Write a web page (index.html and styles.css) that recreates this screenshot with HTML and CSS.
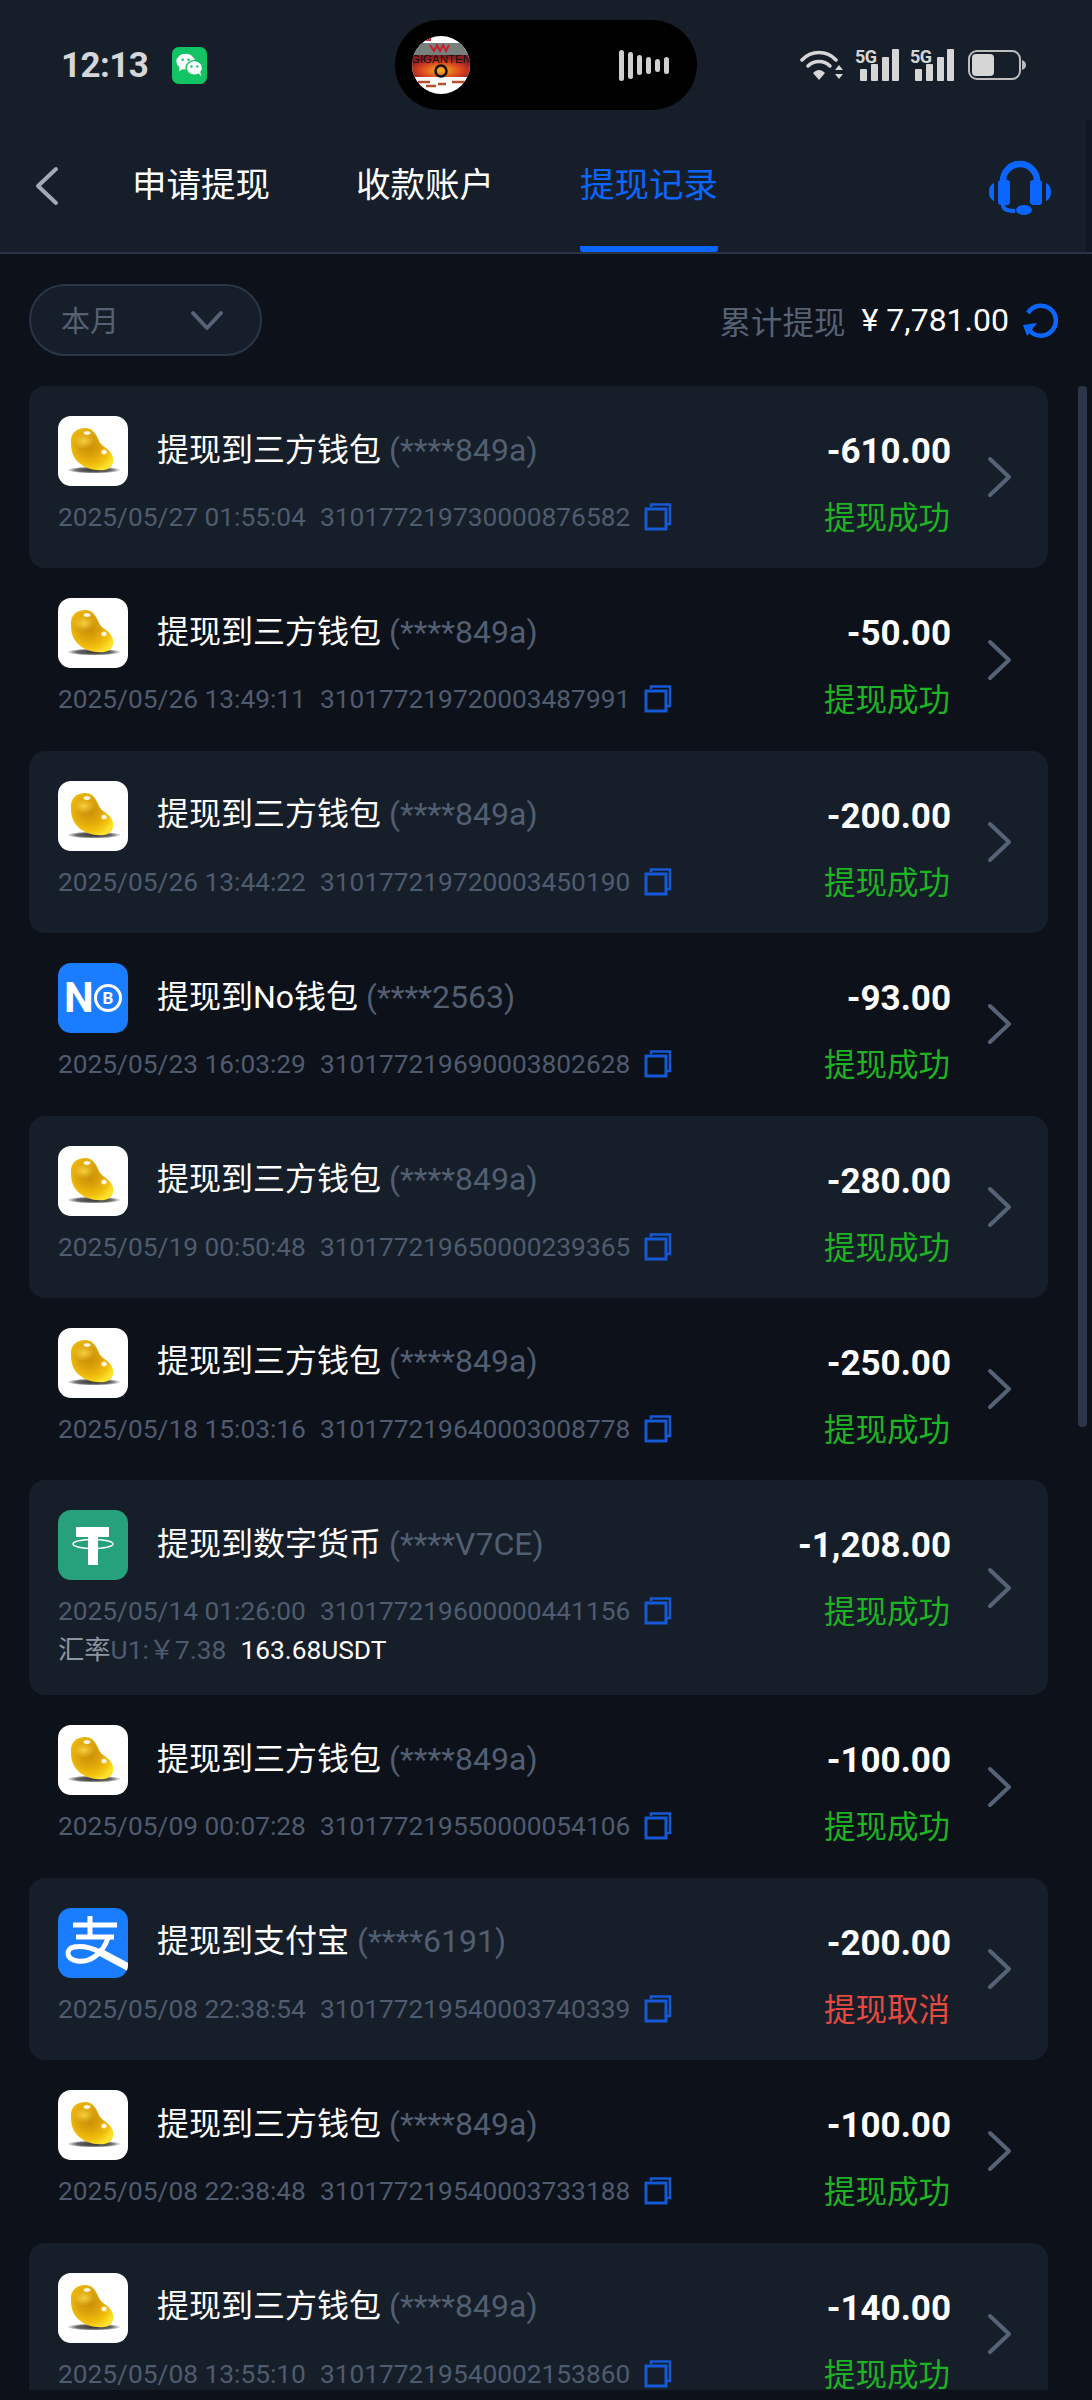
FILE: index.html
```html
<!DOCTYPE html>
<html lang="zh-CN">
<head>
  <meta charset="UTF-8">
  <meta name="viewport" content="width=device-width, initial-scale=1.0">
  <title>提现记录</title>
  <link rel="stylesheet" href="styles.css">
</head>
<body>
  <!-- shared icons -->
  <svg class="defs" width="0" height="0">
    <defs>
      <radialGradient id="beanFill" cx="0.42" cy="0.4" r="0.66">
        <stop offset="0" stop-color="#c68c08"/>
        <stop offset="0.4" stop-color="#dca20a"/>
        <stop offset="0.75" stop-color="#f2c00c"/>
        <stop offset="1" stop-color="#ffe22e"/>
      </radialGradient>
      <radialGradient id="beanLobe" cx="0.5" cy="0.5" r="0.5">
        <stop offset="0" stop-color="#f6cf3c"/>
        <stop offset="1" stop-color="#f6cf3c" stop-opacity="0"/>
      </radialGradient>
      <radialGradient id="beanShine" cx="0.5" cy="0.5" r="0.5">
        <stop offset="0" stop-color="#fff"/>
        <stop offset="0.55" stop-color="#fff" stop-opacity="0.85"/>
        <stop offset="1" stop-color="#fff" stop-opacity="0"/>
      </radialGradient>
      <radialGradient id="beanShadow" cx="0.5" cy="0.5" r="0.5">
        <stop offset="0" stop-color="#333"/>
        <stop offset="0.65" stop-color="#666"/>
        <stop offset="1" stop-color="#fff"/>
      </radialGradient>
      <radialGradient id="logoFill" cx="0.5" cy="0.7" r="0.6">
        <stop offset="0" stop-color="#f5b324"/>
        <stop offset="0.6" stop-color="#d9431f"/>
        <stop offset="1" stop-color="#8a1d22"/>
      </radialGradient>
    </defs>
    <symbol id="bean" viewBox="0 0 70 70">
      <rect width="70" height="70" rx="13" fill="#fff"/>
      <ellipse cx="36" cy="54" rx="27" ry="3.500" fill="url(#beanShadow)"/>
      <path d="M13 27C12 17 19 12 27 12C35 12 38 18 41 25C43 30 50 32 53 37C58 44 55 53 46 54C36 55 26 52 20 46C15 41 13 35 13 27Z" fill="url(#beanFill)"/>
      <ellipse cx="26" cy="25" rx="11" ry="8" fill="url(#beanLobe)"/>
      <ellipse cx="29" cy="17" rx="4.500" ry="2.500" fill="url(#beanShine)"/>
      <ellipse cx="46" cy="36" rx="3.500" ry="3" fill="url(#beanShine)"/>
    </symbol>
    <symbol id="copy" viewBox="0 0 28 28">
      <path d="M7 4V1.500H26V21H23" fill="none" stroke="#1659d6" stroke-width="2.500"/>
      <rect x="2" y="6" width="20" height="20" fill="none" stroke="#1659d6" stroke-width="3"/>
    </symbol>
    <symbol id="arrow" viewBox="0 0 26 42">
      <path d="M3 3L22 21L3 39" fill="none" stroke="#566377" stroke-width="4" stroke-linecap="round" stroke-linejoin="round"/>
    </symbol>
  </svg>

  <div class="statusbar">
    <div class="status-left">
      <span class="clock">12:13</span>
      <svg class="wechat" viewBox="0 0 36 38">
        <rect width="36" height="38" rx="7" fill="#12c464"/>
        <ellipse cx="14" cy="15" rx="9.500" ry="8" fill="#fff"/>
        <path d="M8 20L7 25L13 22Z" fill="#fff"/>
        <ellipse cx="23" cy="21.500" rx="8.500" ry="7.500" fill="#fff" stroke="#12c464" stroke-width="1.500"/>
        <path d="M27 27L30 30L29 25Z" fill="#fff"/>
        <circle cx="11" cy="13" r="1.300" fill="#12c464"/>
        <circle cx="17" cy="13" r="1.300" fill="#12c464"/>
        <circle cx="20" cy="20" r="1.200" fill="#12c464"/>
        <circle cx="26" cy="20" r="1.200" fill="#12c464"/>
      </svg>
    </div>
    <div class="island">
      <svg class="music-cover" viewBox="0 0 58 58">
        <clipPath id="coverClip"><circle cx="29" cy="29" r="29"/></clipPath>
        <g clip-path="url(#coverClip)">
          <rect width="58" height="58" fill="#fff"/>
          <rect y="7" width="58" height="14" fill="#77807c"/>
          <rect y="19" width="58" height="22" fill="url(#logoFill)"/>
          <rect x="7" y="1" width="12" height="4" fill="#c8283a"/>
          <path d="M18 9l4 6 3-6 3 6 3-6 3 6 3-6" fill="none" stroke="#c8202a" stroke-width="2"/>
          <text class="cover-name" x="29" y="27">GIGANTEN</text>
          <circle cx="29" cy="35" r="5.500" fill="none" stroke="#111" stroke-width="2.500"/>
          <path d="M6 46h12M26 48h8M40 46h13M14 50h10" stroke="#b4502c" stroke-width="2.500"/>
        </g>
      </svg>
      <div class="bars">
        <i class="b1"></i><i class="b2"></i><i class="b3"></i><i class="b4"></i><i class="b5"></i><i class="b4"></i>
      </div>
    </div>
    <div class="status-right">
      <svg class="wifi" viewBox="0 0 44 32">
        <path d="M2 11C11 1 27 1 36 11" fill="none" stroke="#d6d6d6" stroke-width="3.500" stroke-linecap="round"/>
        <path d="M8 17C14 11 24 11 30 17" fill="none" stroke="#d6d6d6" stroke-width="3.500" stroke-linecap="round"/>
        <path d="M13 24C17 20 21 20 25 24L19 31Z" fill="#d6d6d6"/>
        <path d="M35 21L39 16L43 21ZM35 25H43L39 30Z" fill="#d6d6d6"/>
      </svg>
      <svg class="signal" viewBox="0 -6 44 38">
        <text class="net" x="0" y="14">5G</text>
        <rect x="5" y="20" width="7" height="12" rx="1" fill="#d6d6d6"/>
        <rect x="16" y="15" width="7" height="17" rx="1" fill="#d6d6d6"/>
        <rect x="27" y="8" width="7" height="24" rx="1" fill="#d6d6d6"/>
        <rect x="37" y="0" width="7" height="32" rx="1" fill="#d6d6d6"/>
      </svg>
      <svg class="signal" viewBox="0 -6 44 38">
        <text class="net" x="0" y="14">5G</text>
        <rect x="5" y="20" width="7" height="12" rx="1" fill="#d6d6d6"/>
        <rect x="16" y="15" width="7" height="17" rx="1" fill="#d6d6d6"/>
        <rect x="27" y="8" width="7" height="24" rx="1" fill="#d6d6d6"/>
        <rect x="37" y="0" width="7" height="32" rx="1" fill="#d6d6d6"/>
      </svg>
      <svg class="battery" viewBox="0 0 58 30">
        <rect x="1" y="1" width="51" height="28" rx="8" fill="none" stroke="#bdbdbd" stroke-width="2"/>
        <rect x="4" y="4" width="22" height="22" rx="4" fill="#d6d6d6"/>
        <path d="M54 10C57 11 58 13 58 15C58 17 57 19 54 20Z" fill="#bdbdbd"/>
      </svg>
    </div>
  </div>

  <div class="nav">
    <svg class="back" viewBox="0 0 24 40">
      <path d="M21 3L3 20L21 37" fill="none" stroke="#a3aab6" stroke-width="4" stroke-linecap="round" stroke-linejoin="round"/>
    </svg>
    <div class="tabs">
      <a class="tab">申请提现</a>
      <a class="tab">收款账户</a>
      <a class="tab active">提现记录</a>
    </div>
    <svg class="headset" viewBox="0 0 62 56">
      <path d="M14 26V22a17 17 0 0 1 34 0V26" fill="none" stroke="#0b66ff" stroke-width="6.500"/>
      <rect x="9" y="21" width="12" height="25" rx="3" fill="#0b66ff"/>
      <rect x="41" y="21" width="12" height="25" rx="3" fill="#0b66ff"/>
      <path d="M5 24V42C1 40 0 37 0 33C0 29 1 26 5 24ZM57 24V42C61 40 62 37 62 33C62 29 61 26 57 24Z" fill="#0b66ff"/>
      <path d="M14 46C14 50 18 52 26 52" fill="none" stroke="#0b66ff" stroke-width="4"/>
      <ellipse cx="35" cy="51" rx="8" ry="5" fill="#0b66ff"/>
    </svg>
  </div>

  <div class="scroll-track"></div>
  <div class="scroll-thumb"></div>

  <div class="toolbar">
    <div class="month-select">
      <span>本月</span>
      <svg class="caret" viewBox="0 0 34 22">
        <path d="M3 3L17 18L31 3" fill="none" stroke="#566377" stroke-width="4" stroke-linecap="round" stroke-linejoin="round"/>
      </svg>
    </div>
    <div class="total">
      <span class="total-label">累计提现</span>
      <span class="total-value">¥ 7,781.00</span>
      <svg class="refresh" viewBox="0 0 36 36">
        <path d="M6 11A15 15 0 1 1 8 29" fill="none" stroke="#0b66ff" stroke-width="4.500"/>
        <path d="M1 23L15 21L5 34Z" fill="#0b66ff"/>
      </svg>
    </div>
  </div>

  <div class="list">
    <div class="row">
      <div class="main">
        <div class="head">
          <svg class="logo"><use href="#bean"/></svg>
          <div class="title">提现到三方钱包 <span class="mask">(****849a)</span></div>
        </div>
        <div class="meta">
          <span>2025/05/27 01:55:04</span><span>310177219730000876582</span>
          <svg class="copy"><use href="#copy"/></svg>
        </div>
      </div>
      <div class="side"><div class="amount">-610.00</div><div class="state ok">提现成功</div></div>
      <svg class="arrow"><use href="#arrow"/></svg>
    </div>

    <div class="row">
      <div class="main">
        <div class="head">
          <svg class="logo"><use href="#bean"/></svg>
          <div class="title">提现到三方钱包 <span class="mask">(****849a)</span></div>
        </div>
        <div class="meta">
          <span>2025/05/26 13:49:11</span><span>310177219720003487991</span>
          <svg class="copy"><use href="#copy"/></svg>
        </div>
      </div>
      <div class="side"><div class="amount">-50.00</div><div class="state ok">提现成功</div></div>
      <svg class="arrow"><use href="#arrow"/></svg>
    </div>

    <div class="row">
      <div class="main">
        <div class="head">
          <svg class="logo"><use href="#bean"/></svg>
          <div class="title">提现到三方钱包 <span class="mask">(****849a)</span></div>
        </div>
        <div class="meta">
          <span>2025/05/26 13:44:22</span><span>310177219720003450190</span>
          <svg class="copy"><use href="#copy"/></svg>
        </div>
      </div>
      <div class="side"><div class="amount">-200.00</div><div class="state ok">提现成功</div></div>
      <svg class="arrow"><use href="#arrow"/></svg>
    </div>

    <div class="row">
      <div class="main">
        <div class="head">
          <svg class="logo" viewBox="0 0 70 70">
            <rect width="70" height="70" rx="13" fill="#1a7cff"/>
            <text class="no-n" x="6" y="49">N</text>
            <circle cx="50" cy="35" r="12.500" fill="none" stroke="#fff" stroke-width="3"/>
            <text class="no-b" x="50" y="41">B</text>
          </svg>
          <div class="title">提现到No钱包 <span class="mask">(****2563)</span></div>
        </div>
        <div class="meta">
          <span>2025/05/23 16:03:29</span><span>310177219690003802628</span>
          <svg class="copy"><use href="#copy"/></svg>
        </div>
      </div>
      <div class="side"><div class="amount">-93.00</div><div class="state ok">提现成功</div></div>
      <svg class="arrow"><use href="#arrow"/></svg>
    </div>

    <div class="row">
      <div class="main">
        <div class="head">
          <svg class="logo"><use href="#bean"/></svg>
          <div class="title">提现到三方钱包 <span class="mask">(****849a)</span></div>
        </div>
        <div class="meta">
          <span>2025/05/19 00:50:48</span><span>310177219650000239365</span>
          <svg class="copy"><use href="#copy"/></svg>
        </div>
      </div>
      <div class="side"><div class="amount">-280.00</div><div class="state ok">提现成功</div></div>
      <svg class="arrow"><use href="#arrow"/></svg>
    </div>

    <div class="row">
      <div class="main">
        <div class="head">
          <svg class="logo"><use href="#bean"/></svg>
          <div class="title">提现到三方钱包 <span class="mask">(****849a)</span></div>
        </div>
        <div class="meta">
          <span>2025/05/18 15:03:16</span><span>310177219640003008778</span>
          <svg class="copy"><use href="#copy"/></svg>
        </div>
      </div>
      <div class="side"><div class="amount">-250.00</div><div class="state ok">提现成功</div></div>
      <svg class="arrow"><use href="#arrow"/></svg>
    </div>

    <div class="row">
      <div class="main">
        <div class="head">
          <svg class="logo" viewBox="0 0 70 70">
            <rect width="70" height="70" rx="13" fill="#26a17b"/>
            <path d="M18 17H51V27H40V55H30V27H18Z" fill="#fff"/>
            <ellipse cx="35" cy="34" rx="20" ry="4.500" fill="none" stroke="#fff" stroke-width="1.500"/>
          </svg>
          <div class="title">提现到数字货币 <span class="mask">(****V7CE)</span></div>
        </div>
        <div class="meta">
          <span>2025/05/14 01:26:00</span><span>310177219600000441156</span>
          <svg class="copy"><use href="#copy"/></svg>
        </div>
        <div class="rate">
          <span><b>汇率</b>U1:￥7.38</span><span class="usdt">163.68USDT</span>
        </div>
      </div>
      <div class="side"><div class="amount">-1,208.00</div><div class="state ok">提现成功</div></div>
      <svg class="arrow"><use href="#arrow"/></svg>
    </div>

    <div class="row">
      <div class="main">
        <div class="head">
          <svg class="logo"><use href="#bean"/></svg>
          <div class="title">提现到三方钱包 <span class="mask">(****849a)</span></div>
        </div>
        <div class="meta">
          <span>2025/05/09 00:07:28</span><span>310177219550000054106</span>
          <svg class="copy"><use href="#copy"/></svg>
        </div>
      </div>
      <div class="side"><div class="amount">-100.00</div><div class="state ok">提现成功</div></div>
      <svg class="arrow"><use href="#arrow"/></svg>
    </div>

    <div class="row">
      <div class="main">
        <div class="head">
          <svg class="logo" viewBox="0 0 70 70">
            <clipPath id="alipayClip"><rect width="70" height="70" rx="13"/></clipPath>
            <rect width="70" height="70" rx="13" fill="#1a7cff"/>
            <g clip-path="url(#alipayClip)" fill="none" stroke="#fff" stroke-width="5">
              <path d="M15 17H59M18 29H56M32 8V29"/>
              <path d="M50 30C44 47 31 55 19 53C8 51 7 41 16 39C26 37 34 40 42 44"/>
              <path d="M40 43L72 60" stroke-width="7.500"/>
            </g>
          </svg>
          <div class="title">提现到支付宝 <span class="mask">(****6191)</span></div>
        </div>
        <div class="meta">
          <span>2025/05/08 22:38:54</span><span>310177219540003740339</span>
          <svg class="copy"><use href="#copy"/></svg>
        </div>
      </div>
      <div class="side"><div class="amount">-200.00</div><div class="state cancel">提现取消</div></div>
      <svg class="arrow"><use href="#arrow"/></svg>
    </div>

    <div class="row">
      <div class="main">
        <div class="head">
          <svg class="logo"><use href="#bean"/></svg>
          <div class="title">提现到三方钱包 <span class="mask">(****849a)</span></div>
        </div>
        <div class="meta">
          <span>2025/05/08 22:38:48</span><span>310177219540003733188</span>
          <svg class="copy"><use href="#copy"/></svg>
        </div>
      </div>
      <div class="side"><div class="amount">-100.00</div><div class="state ok">提现成功</div></div>
      <svg class="arrow"><use href="#arrow"/></svg>
    </div>

    <div class="row">
      <div class="main">
        <div class="head">
          <svg class="logo"><use href="#bean"/></svg>
          <div class="title">提现到三方钱包 <span class="mask">(****849a)</span></div>
        </div>
        <div class="meta">
          <span>2025/05/08 13:55:10</span><span>310177219540002153860</span>
          <svg class="copy"><use href="#copy"/></svg>
        </div>
      </div>
      <div class="side"><div class="amount">-140.00</div><div class="state ok">提现成功</div></div>
      <svg class="arrow"><use href="#arrow"/></svg>
    </div>
  </div>
</body>
</html>
```

FILE: styles.css
```css
:root {
  --bg-dark: #0d1119;
  --bg-card: #161e29;
  --line: #2a3546;
  --blue: #0b66ff;
  --grey: #4f5b6e;
  --font-family: Roboto, "Noto Sans CJK SC", sans-serif;
}
* { box-sizing: border-box; margin: 0; padding: 0; }
html, body { height: 2400px; overflow: hidden; }
body { font-family: var(--font-family); background-color: var(--bg-dark); color: #fff; position: relative; }
.defs { position: absolute; }

/* status bar */
.statusbar { display: grid; grid-template-columns: 395px 302px 1fr; height: 120px; padding-top: 20px; background-color: var(--bg-card); }
.status-left { display: flex; align-items: center; height: 90px; padding-left: 61px; gap: 24px; }
.clock { font-size: 35px; font-weight: 700; letter-spacing: -0.6px; color: #d4d6d9; }
.wechat { width: 35px; height: 37px; }
.island { display: flex; align-items: center; justify-content: space-between; height: 90px; padding: 0 28px 0 17px; background-color: #000; border-radius: 45px; }
.music-cover { width: 58px; height: 58px; }
.cover-name { font: 400 11.5px "Liberation Sans", sans-serif; fill: #111; text-anchor: middle; }
.bars { display: flex; align-items: center; gap: 4px; }
.bars i { display: block; width: 5px; background-color: #cfcfcf; border-radius: 3px; }
.bars .b1 { height: 31px; }
.bars .b2 { height: 27px; }
.bars .b3 { height: 20px; }
.bars .b4 { height: 17px; }
.bars .b5 { height: 13px; }
.status-right { display: flex; align-items: center; height: 90px; padding-left: 103px; gap: 11px; }
.wifi { width: 44px; height: 32px; }
.signal { width: 44px; height: 38px; margin-top: -6px; }
.net { font: 700 18px Roboto, sans-serif; letter-spacing: -0.5px; fill: #d6d6d6; }
.battery { width: 58px; height: 30px; margin-left: 3px; }

/* nav */
.nav { display: flex; height: 134px; background-color: var(--bg-card); border-bottom: 2px solid var(--line); position: relative; }
.back { width: 24px; height: 40px; margin: 46px 0 0 35px; }
.tabs { display: flex; gap: 86px; margin-left: 73px; }
.tab { display: block; height: 132px; font-size: 34.5px; line-height: 130px; color: #fff; }
.tab.active { color: var(--blue); border-bottom: 6px solid var(--blue); border-radius: 0 0 3px 3px; line-height: 130px; }
.headset { position: absolute; left: 989px; top: 39px; width: 62px; height: 56px; }

/* scrollbar, sits over the page */
.scroll-track { position: absolute; top: 120px; right: 0; width: 6px; height: 132px; background-color: #111823; }
.scroll-thumb { position: absolute; top: 386px; left: 1078px; width: 9px; height: 1041px; background-color: #2c3648; border-radius: 4px; }

/* filter row */
.toolbar { display: flex; align-items: center; justify-content: space-between; height: 132px; padding: 0 34px 0 29px; }
.month-select { display: flex; align-items: center; justify-content: space-between; width: 233px; height: 72px; padding: 0 36px 0 30px; font-size: 29px; color: #566174; background-color: var(--bg-card); border: 2px solid var(--line); border-radius: 36px; }
.month-select span { margin-top: -2px; }
.caret { width: 34px; height: 22px; margin-top: 1px; }
.total { display: flex; align-items: center; }
.total-label { font-size: 31.5px; color: #566174; }
.total-value { margin-left: 16px; font-size: 32px; color: #fff; }
.refresh { width: 36px; height: 36px; margin-left: 13px; }

/* records */
.list { height: 2004px; overflow: hidden; padding: 0 44px 0 29px; }
.row { display: flex; align-items: center; min-height: 182.4px; border-radius: 16px; padding-right: 35px; }
.row:nth-child(odd) { background-color: var(--bg-card); }
.main { flex: 1; align-self: flex-start; padding: 30px 0 25px 29px; }
.head { display: flex; align-items: center; gap: 29px; }
.logo { width: 70px; height: 70px; flex-shrink: 0; }
.title { font-size: 32px; line-height: 44px; margin-top: -3px; color: #fff; }
.mask { color: #525e71; }
.no-n { font: 700 42px Roboto, sans-serif; fill: #fff; }
.no-b { font: 700 17px Roboto, sans-serif; fill: #fff; text-anchor: middle; }
.meta { display: flex; align-items: center; gap: 14px; height: 40px; margin-top: 11px; font-size: 26.3px; color: var(--grey); }
.copy { width: 28px; height: 28px; }
.rate { display: flex; gap: 14px; height: 40px; font-size: 26.3px; line-height: 40px; color: var(--grey); margin-top: -1px; }
.rate b { font-weight: 400; color: #8d96a3; }
.usdt { color: #fff; }
.side { align-self: flex-start; padding-top: 44px; text-align: right; }
.amount { font-size: 35px; font-weight: 700; line-height: 44px; }
.state { margin-top: 23px; padding-right: 1px; font-size: 31.500px; line-height: 44px; }
.state.ok { color: #1eb322; }
.state.cancel { color: #e5493f; }
.arrow { width: 26px; height: 42px; margin-left: 36px; }
```
